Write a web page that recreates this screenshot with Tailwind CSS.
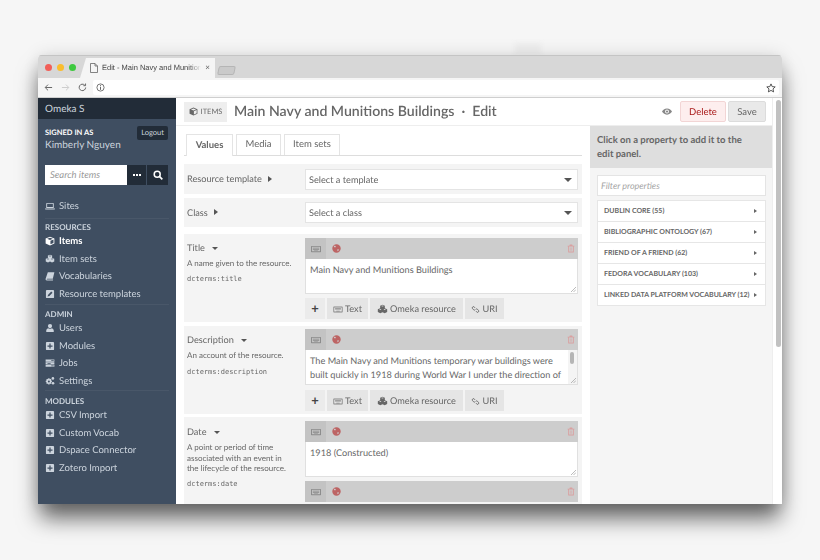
<!DOCTYPE html>
<html lang="en">
<head>
    <meta charset="UTF-8">
    <title>Edit - Main Navy and Munitions Buildings</title>
    <script src="https://cdn.jsdelivr.net/npm/@tailwindcss/browser@4"></script>
</head>
<body class="relative bg-[#f6f6f6] w-[820px] h-[560px] overflow-hidden font-['Lato',sans-serif] text-[#676767] [text-rendering:geometricPrecision]">

    <!-- Icon sprite -->
    <svg class="hidden" xmlns="http://www.w3.org/2000/svg">
        <symbol id="i-cube" viewBox="0 0 16 16"><path fill="currentColor" d="M8 1 15 3.8V12L8 15 1 12V3.8ZM8 2.6 3.4 4.4 8 6.2 12.6 4.4ZM8.7 7.4V13.2L13.6 11.1V5.5Z"/></symbol>
        <symbol id="i-cubes" viewBox="0 0 16 16"><path fill="currentColor" d="M8 1 11.4 2.4V6.2L14.8 7.6V11.8L11.2 13.4 8 12 4.8 13.4 1.2 11.8V7.6L4.6 6.2V2.4ZM8 2.2 6 3 8 3.8 10 3ZM4.8 7.3 3 8 4.8 8.8 6.6 8ZM11.2 7.3 9.4 8 11.2 8.8 13 8Z"/></symbol>
        <symbol id="i-book" viewBox="0 0 16 16"><path fill="currentColor" d="M4.5 2H15L12.5 12.5H3.5C2.8 12.5 2.6 13 3 13.4H13L12.6 15H3C1.4 15 .6 13.6 1 12.3Z"/></symbol>
        <symbol id="i-pencil" viewBox="0 0 16 16"><path fill="currentColor" fill-rule="evenodd" d="M3 1.5H13A1.5 1.5 0 0 1 14.5 3V13A1.5 1.5 0 0 1 13 14.5H3A1.5 1.5 0 0 1 1.5 13V3A1.5 1.5 0 0 1 3 1.5ZM4 12 7 11.2 12 6 10 4 5 9.2Z"/></symbol>
        <symbol id="i-user" viewBox="0 0 16 16"><circle cx="8" cy="4.8" r="3.4" fill="currentColor"/><path fill="currentColor" d="M2 14.5V12C2 9.6 3.8 8.4 5.2 8.2 6.8 9.4 9.2 9.4 10.8 8.2 12.2 8.4 14 9.6 14 12V14.5Z"/></symbol>
        <symbol id="i-plus-sq" viewBox="0 0 16 16"><path fill="currentColor" fill-rule="evenodd" d="M3 1.5H13A1.5 1.5 0 0 1 14.5 3V13A1.5 1.5 0 0 1 13 14.5H3A1.5 1.5 0 0 1 1.5 13V3A1.5 1.5 0 0 1 3 1.5ZM7 4V7H4V9H7V12H9V9H12V7H9V4Z"/></symbol>
        <symbol id="i-tasks" viewBox="0 0 16 16"><path fill="currentColor" d="M1 2.5H15V6H1ZM1 6.8H15V10H1ZM1 10.8H15V14H1Z"/><path fill="#3f4e61" d="M10 3.6H14V4.8H10ZM4 7.8H9V9H4ZM10 11.8H14V13H10Z"/></symbol>
        <symbol id="i-cogs" viewBox="0 0 16 16"><path fill="currentColor" fill-rule="evenodd" d="M5.2 3.6H7.2L7.6 5 9 4.4 10.3 5.8 9.7 7.1 11 7.6V9.6L9.7 10 10.3 11.4 9 12.8 7.6 12.1 7.2 13.6H5.2L4.8 12.1 3.4 12.8 2 11.4 2.6 10 1.2 9.6V7.6L2.6 7.1 2 5.8 3.4 4.4 4.8 5ZM6.2 7A1.6 1.6 0 1 0 6.2 10.2 1.6 1.6 0 1 0 6.2 7Z"/><circle cx="12.6" cy="3.8" r="2.1" fill="currentColor"/><circle cx="12.8" cy="11.6" r="2.1" fill="currentColor"/></symbol>
        <symbol id="i-laptop" viewBox="0 0 16 16"><path fill="currentColor" fill-rule="evenodd" d="M3 3H13A1 1 0 0 1 14 4V11H2V4A1 1 0 0 1 3 3ZM3.4 4.4V9.6H12.6V4.4ZM0 11.8H16V12.5A1 1 0 0 1 15 13.5H1A1 1 0 0 1 0 12.5Z"/></symbol>
        <symbol id="i-keyboard" viewBox="0 0 16 12"><path fill="currentColor" fill-rule="evenodd" d="M1 1H15A1 1 0 0 1 16 2V10A1 1 0 0 1 15 11H1A1 1 0 0 1 0 10V2A1 1 0 0 1 1 1ZM1.5 2.5V9.5H14.5V2.5ZM3 4H13V5H3ZM3 6H13V7H3ZM5 8H11V8.8H5Z"/></symbol>
        <symbol id="i-globe" viewBox="0 0 16 16"><path fill="currentColor" fill-rule="evenodd" d="M8 .5A7.5 7.5 0 1 1 8 15.5 7.5 7.5 0 1 1 8 .5ZM5 2.5 7 4.5 5.5 6 3 5ZM10 9 12.5 10 10.5 13 9.5 12Z"/></symbol>
        <symbol id="i-trash" viewBox="0 0 14 16"><path fill="currentColor" fill-rule="evenodd" d="M5 1H9L10 3H13V4.5H12V14A1 1 0 0 1 11 15H3A1 1 0 0 1 2 14V4.5H1V3H4ZM3.5 4.5V13.5H10.5V4.5ZM5 6H6V12H5ZM8 6H9V12H8Z"/></symbol>
        <symbol id="i-link" viewBox="0 0 16 16"><path fill="none" stroke="currentColor" stroke-width="1.7" d="M7 5 5.5 3.2A2.2 2.2 0 0 0 2.6 6.3L4.5 8.4A2.2 2.2 0 0 0 7.5 8.4M9 11 10.5 12.8A2.2 2.2 0 0 0 13.4 9.7L11.5 7.6A2.2 2.2 0 0 0 8.5 7.6"/></symbol>
        <symbol id="i-grip" viewBox="0 0 6 6"><path stroke="#8c8c8c" stroke-width=".7" d="M0 6 6 0M3 6 6 3"/></symbol>
    </svg>

    <!-- Faint smudge above the window -->
    <div class="absolute left-[515px] top-[43px] w-[26px] h-[12px] bg-[#eeeeee] blur-[2px]"></div>

    <!-- Browser window -->
    <div class="relative mt-[55px] ml-[38px] w-[744px] h-[449px] rounded-t-[4px] overflow-hidden flex flex-col bg-white blur-[0.35px] shadow-[0_16px_22px_-2px_rgba(0,0,0,0.6),0_0_18px_rgba(0,0,0,0.12)]">

        <!-- Tab strip -->
        <div class="h-[23px] shrink-0 bg-[#d7d7d7] border-t border-[#c4c4c4] flex items-end pl-[7px]">
            <div class="flex gap-[5px] self-center mr-[4px]">
                <span class="w-[7px] h-[7px] rounded-full bg-[#f25f58]"></span>
                <span class="w-[7px] h-[7px] rounded-full bg-[#fabd2e]"></span>
                <span class="w-[7px] h-[7px] rounded-full bg-[#3ec93f]"></span>
            </div>
            <div class="w-[135px] h-[20px] bg-[#f5f5f5] [clip-path:polygon(6px_0,100%_0,100%_100%,0_100%)] flex items-center pl-[10px] pr-[5px] gap-[4px] text-[7.5px] text-[#444] font-['Liberation_Sans',sans-serif]">
                <svg class="w-[8px] h-[10px] shrink-0" viewBox="0 0 8 10"><path fill="none" stroke="#666" stroke-width=".8" d="M.5.5H5L7.5 3V9.5H.5ZM5 .5V3H7.5"/></svg>
                <span class="flex-1 whitespace-nowrap overflow-hidden [mask-image:linear-gradient(to_right,black_88%,transparent)]">Edit - Main Navy and Munitions</span>
                <span class="text-[#666] text-[8px]">×</span>
            </div>
            <div class="ml-[3px] mb-[3px] w-[17px] h-[9px] bg-[#cacaca] border border-[#b5b5b5] rounded-[2px] -skew-x-12"></div>
        </div>

        <!-- Address bar -->
        <div class="h-[20px] shrink-0 bg-[#f5f5f5] border-b border-[#cfcfcf] flex items-center pl-[6px] pr-[3px] text-[#666]">
            <svg class="w-[9px] h-[9px]" viewBox="0 0 10 10"><path fill="none" stroke="#666" stroke-width="1.1" d="M9 5H1.5M4.5 1.8 1.3 5 4.5 8.2"/></svg>
            <svg class="w-[9px] h-[9px] ml-[8px]" viewBox="0 0 10 10"><path fill="none" stroke="#ccc" stroke-width="1.1" d="M1 5H8.5M5.5 1.8 8.7 5 5.5 8.2"/></svg>
            <svg class="w-[9px] h-[9px] ml-[8px]" viewBox="0 0 10 10"><path fill="none" stroke="#666" stroke-width="1.1" d="M8.5 5A3.6 3.6 0 1 1 7.4 2.3M8.4 .6V3H6"/></svg>
            <div class="ml-[6px] flex-1 h-[15px] bg-white rounded-[2px] flex items-center justify-between px-[3px]">
                <svg class="w-[9px] h-[9px]" viewBox="0 0 10 10"><circle cx="5" cy="5" r="4" fill="none" stroke="#555" stroke-width=".9"/><path stroke="#555" d="M5 4.2V7.6M5 2.4V3.4"/></svg>
                <svg class="w-[10px] h-[10px]" viewBox="0 0 10 10"><path fill="none" stroke="#444" stroke-width=".9" d="M5 .9 6.2 3.6 9.2 3.9 7 5.9 7.6 8.9 5 7.4 2.4 8.9 3 5.9.8 3.9 3.8 3.6Z"/></svg>
            </div>
        </div>

        <!-- Page -->
        <div class="flex-1 min-h-0 flex">

            <!-- Sidebar -->
            <aside class="w-[138px] shrink-0 bg-[#3f4e61] text-[#ccd4dd]">
                <div class="h-[21px] bg-[#222c38] flex items-center px-[7px] pt-[2px] text-[10px]">Omeka S</div>
                <div class="h-[46px] pl-[7px] pr-[8px] pt-[7px] flex justify-between">
                    <div>
                        <div class="text-[7.5px] font-bold text-white leading-[10px] mt-[2px]">SIGNED IN AS</div>
                        <div class="text-[10px] leading-[13px] mt-[1px]">Kimberly Nguyen</div>
                    </div>
                    <div class="h-[14px] px-[4px] bg-[#222c38] rounded-[2px] text-[7.5px] leading-[14px]">Logout</div>
                </div>
                <div class="flex h-[20px] ml-[7px] mr-[8px]">
                    <div class="w-[82px] bg-white flex items-center px-[5px] pt-[2px] text-[9.5px] italic text-[#9a9a9a]">Search items</div>
                    <div class="w-[20px] bg-[#222c38] border-r border-[#3f4e61] flex items-center justify-center gap-[1px]">
                        <span class="w-[2px] h-[2px] bg-white"></span><span class="w-[2px] h-[2px] bg-white"></span><span class="w-[2px] h-[2px] bg-white"></span>
                    </div>
                    <div class="flex-1 bg-[#222c38] flex items-center justify-center">
                        <svg class="w-[10px] h-[10px]" viewBox="0 0 10 10"><circle cx="4.2" cy="4.2" r="3" fill="none" stroke="#fff" stroke-width="1.5"/><path stroke="#fff" stroke-width="1.7" d="M6.4 6.4 9.3 9.3"/></svg>
                    </div>
                </div>
                <div class="mt-[12px] mx-[7px] pb-[3px] border-b border-white/5">
                    <div class="h-[17.5px] flex items-center gap-[4px] pt-[2px] text-[9.5px]"><svg class="w-[10px] h-[10px] -mt-[2px]"><use href="#i-laptop"/></svg>Sites</div>
                </div>
                <div class="mx-[7px] pt-[2px] pb-[1px] border-b border-white/5">
                    <div class="h-[12px] flex items-center text-[8px] font-bold">RESOURCES</div>
                    <div class="h-[17.5px] flex items-center gap-[4px] pt-[2px] text-[9.5px] text-white font-bold"><svg class="w-[10px] h-[10px] -mt-[2px]"><use href="#i-cube"/></svg>Items</div>
                    <div class="h-[17.5px] flex items-center gap-[4px] pt-[2px] text-[9.5px]"><svg class="w-[10px] h-[10px] -mt-[2px]"><use href="#i-cubes"/></svg>Item sets</div>
                    <div class="h-[17.5px] flex items-center gap-[4px] pt-[2px] text-[9.5px]"><svg class="w-[10px] h-[10px] -mt-[2px]"><use href="#i-book"/></svg>Vocabularies</div>
                    <div class="h-[17.5px] flex items-center gap-[4px] pt-[2px] text-[9.5px]"><svg class="w-[10px] h-[10px] -mt-[2px]"><use href="#i-pencil"/></svg>Resource templates</div>
                </div>
                <div class="mx-[7px] pt-[3px] border-b border-white/5">
                    <div class="h-[12px] flex items-center text-[8px] font-bold">ADMIN</div>
                    <div class="h-[17.5px] flex items-center gap-[4px] pt-[2px] text-[9.5px]"><svg class="w-[10px] h-[10px] -mt-[2px]"><use href="#i-user"/></svg>Users</div>
                    <div class="h-[17.5px] flex items-center gap-[4px] pt-[2px] text-[9.5px]"><svg class="w-[10px] h-[10px] -mt-[2px]"><use href="#i-plus-sq"/></svg>Modules</div>
                    <div class="h-[17.5px] flex items-center gap-[4px] pt-[2px] text-[9.5px]"><svg class="w-[10px] h-[10px] -mt-[2px]"><use href="#i-tasks"/></svg>Jobs</div>
                    <div class="h-[17.5px] flex items-center gap-[4px] pt-[2px] text-[9.5px]"><svg class="w-[10px] h-[10px] -mt-[2px]"><use href="#i-cogs"/></svg>Settings</div>
                </div>
                <div class="mx-[7px] pt-[4px]">
                    <div class="h-[12px] flex items-center text-[8px] font-bold">MODULES</div>
                    <div class="h-[17.5px] flex items-center gap-[4px] pt-[2px] text-[9.5px]"><svg class="w-[10px] h-[10px] -mt-[2px]"><use href="#i-plus-sq"/></svg>CSV Import</div>
                    <div class="h-[17.5px] flex items-center gap-[4px] pt-[2px] text-[9.5px]"><svg class="w-[10px] h-[10px] -mt-[2px]"><use href="#i-plus-sq"/></svg>Custom Vocab</div>
                    <div class="h-[17.5px] flex items-center gap-[4px] pt-[2px] text-[9.5px]"><svg class="w-[10px] h-[10px] -mt-[2px]"><use href="#i-plus-sq"/></svg>Dspace Connector</div>
                    <div class="h-[17.5px] flex items-center gap-[4px] pt-[2px] text-[9.5px]"><svg class="w-[10px] h-[10px] -mt-[2px]"><use href="#i-plus-sq"/></svg>Zotero Import</div>
                </div>
            </aside>

            <!-- Content and scrollbar -->
            <div class="flex-1 min-w-0 flex">
                <div class="flex-1 min-w-0 flex flex-col">

                    <!-- Page header -->
                    <header class="h-[28px] shrink-0 flex items-center pl-[8px] pr-[6px] border-b border-[#eee]">
                        <div class="h-[20px] w-[43px] bg-[#eee] flex items-center justify-center gap-[3px] text-[7.5px] mr-[7px]">
                            <svg class="w-[9px] h-[9px]"><use href="#i-cube"/></svg>ITEMS
                        </div>
                        <h1 class="text-[14.1px] pt-[1px] font-semibold text-[#666] whitespace-pre">Main Navy and Munitions Buildings  ·  Edit</h1>
                        <div class="ml-auto flex items-center">
                            <svg class="w-[10px] h-[7px] mr-[8px]" viewBox="0 0 16 11"><path fill="#888" fill-rule="evenodd" d="M8 .5C12 .5 14.8 3.4 16 5.5 14.8 7.6 12 10.5 8 10.5S1.2 7.6 0 5.5C1.2 3.4 4 .5 8 .5ZM8 2.4A3.1 3.1 0 1 0 8 8.6 3.1 3.1 0 1 0 8 2.4Z"/><circle cx="8" cy="5.5" r="1.8" fill="#888"/></svg>
                            <div class="h-[21px] w-[46px] bg-[#fdeeee] border border-[#f2d5d5] rounded-[2px] pt-[3px] text-[9.5px] text-[#a91919] flex items-center justify-center">Delete</div>
                            <div class="h-[21px] w-[38px] ml-[2px] bg-[#e9e9e9] border border-[#dcdcdc] rounded-[2px] pt-[3px] text-[9.5px] flex items-center justify-center">Save</div>
                        </div>
                    </header>

                    <div class="flex-1 min-h-0 flex">
                        <!-- Edit form -->
                        <main class="w-[414px] shrink-0 px-[8px] pt-[8px] overflow-hidden">
                            <nav class="flex gap-[3px] pl-[2px] h-[22px] border-b border-[#ddd] text-[9.5px] mb-[8px]">
                                <div class="w-[47px] h-[22px] border border-b-0 border-[#e4e4e4] flex items-center justify-center pt-[1px] font-bold bg-white">Values</div>
                                <div class="w-[45px] h-[21px] border border-b-0 border-[#e4e4e4] flex items-center justify-center pt-[1px]">Media</div>
                                <div class="w-[56px] h-[21px] border border-b-0 border-[#e4e4e4] flex items-center justify-center pt-[1px]">Item sets</div>
                            </nav>

                            <div class="h-[30px] bg-[#f4f4f4] flex items-center pl-[3px] pr-[4px] mb-[4px]">
                                <div class="w-[118px] flex items-center gap-[6px] text-[9.2px]">Resource template <span class="w-0 h-0 border-y-[3px] border-y-transparent border-l-[4px] border-l-[#555]"></span></div>
                                <div class="flex-1 h-[21px] bg-white border border-[#e4e4e4] flex items-center justify-between pl-[3px] pr-[5px] pt-[1px] text-[9.2px]">Select a template <span class="w-0 h-0 border-x-[4px] border-x-transparent border-t-[4px] border-t-[#555]"></span></div>
                            </div>
                            <div class="h-[29px] bg-[#f4f4f4] flex items-center pl-[3px] pr-[4px] mb-[7px]">
                                <div class="w-[118px] flex items-center gap-[6px] text-[9.2px]">Class <span class="w-0 h-0 border-y-[3px] border-y-transparent border-l-[4px] border-l-[#555]"></span></div>
                                <div class="flex-1 h-[21px] bg-white border border-[#e4e4e4] flex items-center justify-between pl-[3px] pr-[5px] pt-[1px] text-[9.2px]">Select a class <span class="w-0 h-0 border-x-[4px] border-x-transparent border-t-[4px] border-t-[#555]"></span></div>
                            </div>

                            <!-- Title -->
                            <section class="h-[88px] bg-[#f4f4f4] flex pl-[3px] pr-[4px] pt-[4px] mb-[4px]">
                                <div class="w-[118px] shrink-0 pt-[3px]">
                                    <div class="flex items-center gap-[7px] text-[9.2px] h-[14px]">Title <span class="w-0 h-0 border-x-[3.5px] border-x-transparent border-t-[3.5px] border-t-[#555]"></span></div>
                                    <p class="text-[8px] leading-[11px] mt-[3px]">A name given to the resource.</p>
                                    <p class="font-['DejaVu_Sans_Mono',monospace] text-[7px] leading-[9px] mt-[6px]">dcterms:title</p>
                                </div>
                                <div class="flex-1 min-w-0">
                                    <div class="h-[21px] bg-[#cdcdcd] flex items-center">
                                        <div class="w-[21px] h-full bg-[#c3c3c3] flex items-center justify-center text-[#8a8a8a]"><svg class="w-[10px] h-[8px]"><use href="#i-keyboard"/></svg></div>
                                        <svg class="w-[9px] h-[9px] ml-[6px] text-[#bd6464]"><use href="#i-globe"/></svg>
                                        <svg class="w-[8px] h-[9px] ml-auto mr-[3px] text-[#d9a0a0]"><use href="#i-trash"/></svg>
                                    </div>
                                    <div class="relative h-[35px] bg-white border border-t-0 border-[#e0e0e0] px-[4px] pt-[4px] text-[9.2px] leading-[14px] whitespace-nowrap">
                                        Main Navy and Munitions Buildings
                                        <svg class="absolute right-[1px] bottom-[1px] w-[5px] h-[5px]"><use href="#i-grip"/></svg>
                                    </div>
                                    <div class="flex gap-[2px] mt-[4px] h-[21px] text-[9.2px]">
                                        <div class="w-[20px] bg-[#ebebeb] flex items-center justify-center font-bold text-[#444] text-[13px]">+</div>
                                        <div class="w-[41px] bg-[#e5e5e5] flex items-center justify-center gap-[2px] pt-[1px]"><svg class="w-[10px] h-[7px] text-[#888]"><use href="#i-keyboard"/></svg>Text</div>
                                        <div class="w-[93px] bg-[#e5e5e5] flex items-center justify-center gap-[2px] pt-[1px]"><svg class="w-[11px] h-[11px]"><use href="#i-cubes"/></svg>Omeka resource</div>
                                        <div class="w-[39px] bg-[#e5e5e5] flex items-center justify-center gap-[2px] pt-[1px]"><svg class="w-[9px] h-[9px]"><use href="#i-link"/></svg>URI</div>
                                    </div>
                                </div>
                            </section>

                            <!-- Description -->
                            <section class="h-[88px] bg-[#f4f4f4] flex pl-[3px] pr-[4px] pt-[3px] mb-[3px]">
                                <div class="w-[118px] shrink-0 pt-[4px]">
                                    <div class="flex items-center gap-[7px] text-[9.2px] h-[14px]">Description <span class="w-0 h-0 border-x-[3.5px] border-x-transparent border-t-[3.5px] border-t-[#555]"></span></div>
                                    <p class="text-[8px] leading-[11px] mt-[3px]">An account of the resource.</p>
                                    <p class="font-['DejaVu_Sans_Mono',monospace] text-[7px] leading-[9px] mt-[7px]">dcterms:description</p>
                                </div>
                                <div class="flex-1 min-w-0">
                                    <div class="h-[21px] bg-[#cdcdcd] flex items-center">
                                        <div class="w-[21px] h-full bg-[#c3c3c3] flex items-center justify-center text-[#8a8a8a]"><svg class="w-[10px] h-[8px]"><use href="#i-keyboard"/></svg></div>
                                        <svg class="w-[9px] h-[9px] ml-[6px] text-[#bd6464]"><use href="#i-globe"/></svg>
                                        <svg class="w-[8px] h-[9px] ml-auto mr-[3px] text-[#d9a0a0]"><use href="#i-trash"/></svg>
                                    </div>
                                    <div class="relative h-[35px] bg-white border border-t-0 border-[#e0e0e0] pl-[4px] pr-[8px] pt-[4px] text-[9.2px] leading-[14px] overflow-hidden">
                                        The Main Navy and Munitions temporary war buildings were built quickly in 1918 during World War I under the direction of
                                        <div class="absolute right-0 top-0 bottom-0 w-[9px] bg-[#f4f4f4]"><div class="w-[4px] h-[12px] mt-[2px] ml-[2px] bg-[#b5b5b5] rounded-[2px]"></div></div>
                                        <svg class="absolute right-[1px] bottom-[1px] w-[5px] h-[5px]"><use href="#i-grip"/></svg>
                                    </div>
                                    <div class="flex gap-[2px] mt-[5px] h-[21px] text-[9.2px]">
                                        <div class="w-[20px] bg-[#ebebeb] flex items-center justify-center font-bold text-[#444] text-[13px]">+</div>
                                        <div class="w-[41px] bg-[#e5e5e5] flex items-center justify-center gap-[2px] pt-[1px]"><svg class="w-[10px] h-[7px] text-[#888]"><use href="#i-keyboard"/></svg>Text</div>
                                        <div class="w-[93px] bg-[#e5e5e5] flex items-center justify-center gap-[2px] pt-[1px]"><svg class="w-[11px] h-[11px]"><use href="#i-cubes"/></svg>Omeka resource</div>
                                        <div class="w-[39px] bg-[#e5e5e5] flex items-center justify-center gap-[2px] pt-[1px]"><svg class="w-[9px] h-[9px]"><use href="#i-link"/></svg>URI</div>
                                    </div>
                                </div>
                            </section>

                            <!-- Date -->
                            <section class="h-[120px] bg-[#f4f4f4] flex pl-[3px] pr-[4px] pt-[4px]">
                                <div class="w-[118px] shrink-0 pt-[4px]">
                                    <div class="flex items-center gap-[7px] text-[9.2px] h-[14px]">Date <span class="w-0 h-0 border-x-[3.5px] border-x-transparent border-t-[3.5px] border-t-[#555]"></span></div>
                                    <p class="text-[8px] leading-[10.5px] mt-[3px] w-[103px]">A point or period of time associated with an event in the lifecycle of the resource.</p>
                                    <p class="font-['DejaVu_Sans_Mono',monospace] text-[7px] leading-[9px] mt-[6px]">dcterms:date</p>
                                </div>
                                <div class="flex-1 min-w-0">
                                    <div class="h-[21px] bg-[#cdcdcd] flex items-center">
                                        <div class="w-[21px] h-full bg-[#c3c3c3] flex items-center justify-center text-[#8a8a8a]"><svg class="w-[10px] h-[8px]"><use href="#i-keyboard"/></svg></div>
                                        <svg class="w-[9px] h-[9px] ml-[6px] text-[#bd6464]"><use href="#i-globe"/></svg>
                                        <svg class="w-[8px] h-[9px] ml-auto mr-[3px] text-[#d9a0a0]"><use href="#i-trash"/></svg>
                                    </div>
                                    <div class="relative h-[35px] bg-white border border-t-0 border-[#e0e0e0] px-[4px] pt-[4px] text-[9.2px] leading-[14px]">
                                        1918 (Constructed)
                                        <svg class="absolute right-[1px] bottom-[1px] w-[5px] h-[5px]"><use href="#i-grip"/></svg>
                                    </div>
                                    <div class="h-[21px] mt-[4px] bg-[#cdcdcd] flex items-center">
                                        <div class="w-[21px] h-full bg-[#c3c3c3] flex items-center justify-center text-[#8a8a8a]"><svg class="w-[10px] h-[8px]"><use href="#i-keyboard"/></svg></div>
                                        <svg class="w-[9px] h-[9px] ml-[6px] text-[#bd6464]"><use href="#i-globe"/></svg>
                                        <svg class="w-[8px] h-[9px] ml-auto mr-[3px] text-[#d9a0a0]"><use href="#i-trash"/></svg>
                                    </div>
                                </div>
                            </section>
                        </main>

                        <!-- Property selector -->
                        <aside class="flex-1 min-w-0 bg-[#f5f5f5]">
                            <div class="h-[42px] bg-[#dedede] pl-[7px] pr-[24px] pt-[8px] text-[9.5px] leading-[14px] font-bold text-[#666]">Click on a property to add it to the edit panel.</div>
                            <div class="px-[7px] pr-[6px] pt-[7px]">
                                <div class="h-[21px] bg-white border border-[#e4e4e4] flex items-center px-[3px] text-[9px] italic text-[#a5a5a5]">Filter properties</div>
                                <ul class="mt-[4px] bg-white border border-b-0 border-[#e6e6e6] text-[7px] font-bold text-[#666] whitespace-nowrap">
                                    <li class="h-[21px] border-b border-[#e6e6e6] flex items-center justify-between pl-[6px] pr-[8px]">DUBLIN CORE (55) <span class="w-0 h-0 border-y-[2.5px] border-y-transparent border-l-[3px] border-l-[#666]"></span></li>
                                    <li class="h-[21px] border-b border-[#e6e6e6] flex items-center justify-between pl-[6px] pr-[8px]">BIBLIOGRAPHIC ONTOLOGY (67) <span class="w-0 h-0 border-y-[2.5px] border-y-transparent border-l-[3px] border-l-[#666]"></span></li>
                                    <li class="h-[21px] border-b border-[#e6e6e6] flex items-center justify-between pl-[6px] pr-[8px]">FRIEND OF A FRIEND (62) <span class="w-0 h-0 border-y-[2.5px] border-y-transparent border-l-[3px] border-l-[#666]"></span></li>
                                    <li class="h-[21px] border-b border-[#e6e6e6] flex items-center justify-between pl-[6px] pr-[8px]">FEDORA VOCABULARY (103) <span class="w-0 h-0 border-y-[2.5px] border-y-transparent border-l-[3px] border-l-[#666]"></span></li>
                                    <li class="h-[21px] border-b border-[#e6e6e6] flex items-center justify-between pl-[6px] pr-[8px]">LINKED DATA PLATFORM VOCABULARY (12) <span class="w-0 h-0 border-y-[2.5px] border-y-transparent border-l-[3px] border-l-[#666]"></span></li>
                                </ul>
                            </div>
                        </aside>
                    </div>
                </div>

                <!-- Scrollbar -->
                <div class="w-[10px] shrink-0 bg-white border-l border-[#eee] pl-[3px] pt-[2px]">
                    <div class="w-[5px] h-[247px] bg-[#c1c1c1] rounded-[3px]"></div>
                </div>
            </div>
        </div>
    </div>
</body>
</html>
